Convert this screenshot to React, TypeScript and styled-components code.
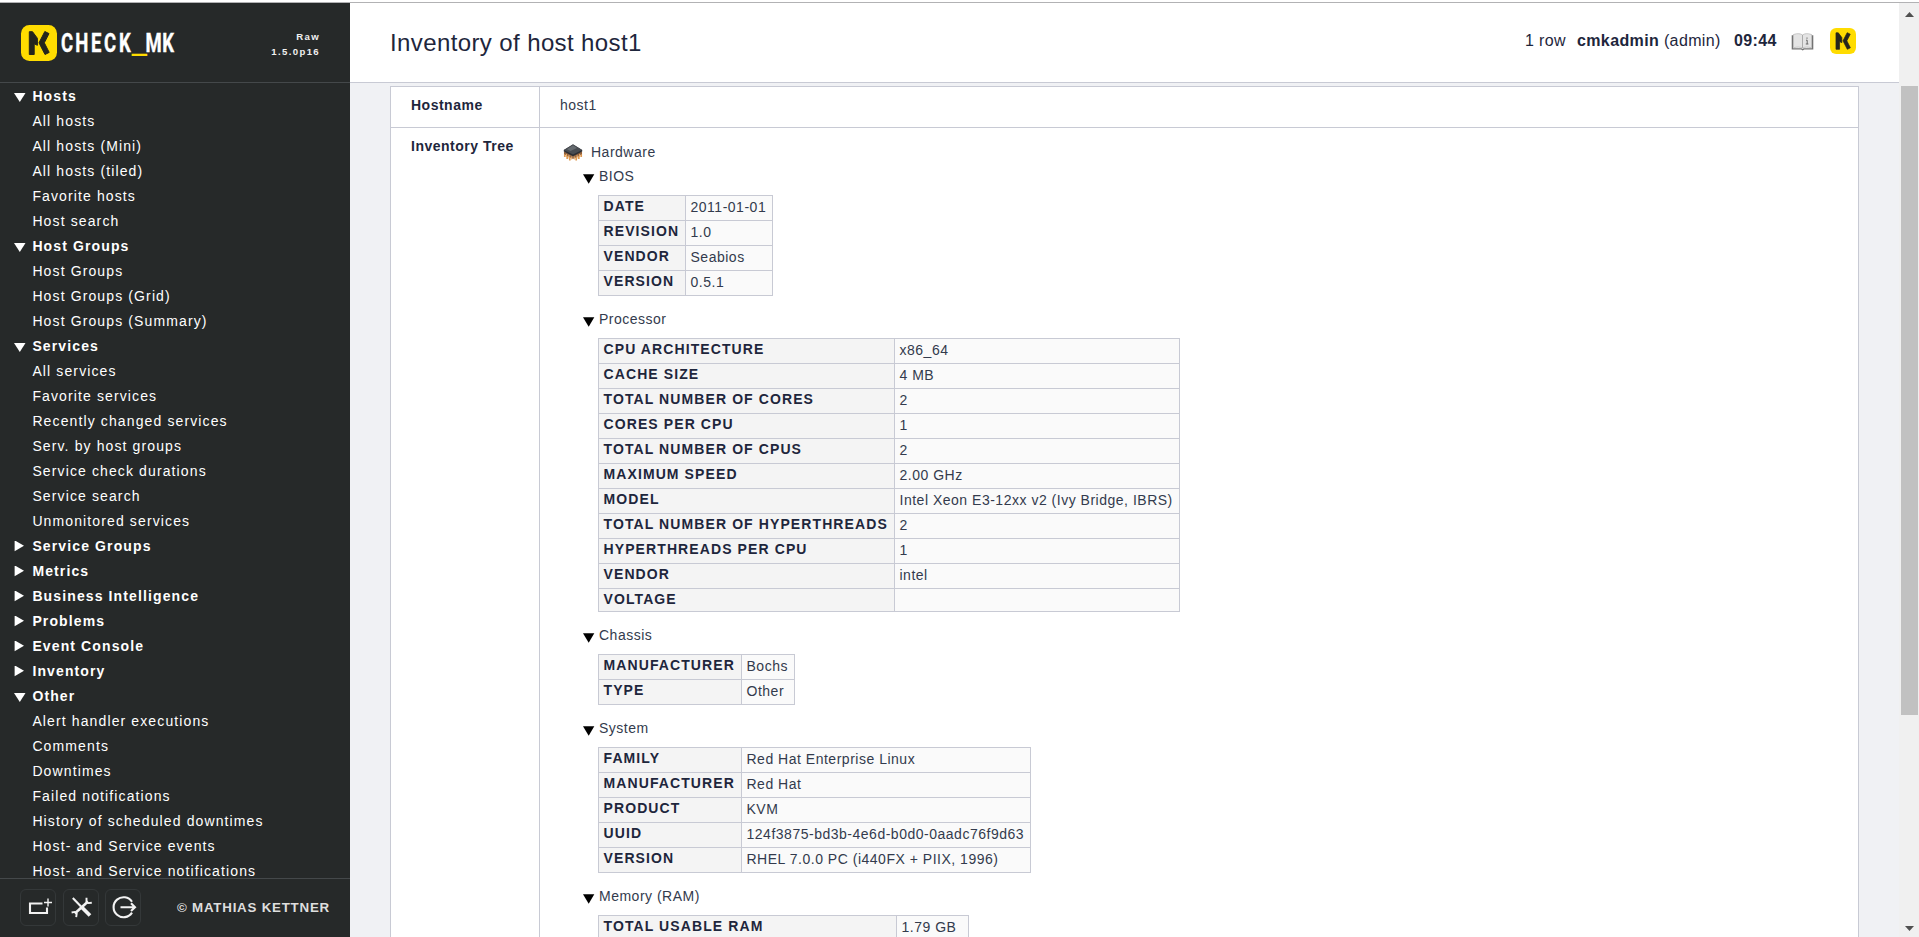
import React from "react";
import styled, { createGlobalStyle } from "styled-components";

const GlobalStyle = createGlobalStyle`
  * { box-sizing: border-box; }
  body {
    margin: 0;
    background: #fff;
    font-family: "Liberation Sans", Arial, sans-serif;
    font-size: 14px;
    overflow: hidden;
  }
`;

const Page = styled.div`
  display: flex;
  flex-direction: column;
  width: 1919px;
  height: 937px;
  overflow: hidden;
`;

const TopLine = styled.div`
  flex: none;
  height: 3px;
  background: #fff;
  border-bottom: 1px solid #b2b2b4;
`;

const Columns = styled.div`
  display: flex;
  flex: 1;
  min-height: 0;
`;

const Sidebar = styled.aside`
  display: flex;
  flex-direction: column;
  width: 350px;
  flex: none;
  background: #262929;
  color: #fff;
`;

const SideHead = styled.div`
  display: flex;
  justify-content: space-between;
  height: 80px;
  flex: none;
  padding: 22px 30px 0 21px;
  border-bottom: 1px solid #44484a;
  svg { overflow: visible; }
`;

const Version = styled.div`
  margin-top: 4px;
  text-align: right;
  font-size: 9.6px;
  line-height: 15px;
  font-weight: bold;
  letter-spacing: 1.35px;
  color: #f0f0f0;
`;

const Nav = styled.nav`
  flex: 1;
  min-height: 0;
  padding-top: 1px;
  overflow: hidden;
`;

const NavRow = styled.div<{ $head?: boolean }>`
  display: flex;
  align-items: center;
  height: 25px;
  padding-left: ${(p) => (p.$head ? 14 : 32.4)}px;
  font-weight: ${(p) => (p.$head ? "bold" : "normal")};
  letter-spacing: 1.12px;
  white-space: nowrap;
  line-height: 25px;

  svg { flex: none; width: 12px; height: 12px; margin-right: 6.4px; }
`;

const SideFoot = styled.div`
  display: flex;
  flex: none;
  height: 59px;
  padding: 10px 0 0 20px;
  border-top: 1px solid #44484a;
`;

const FootButton = styled.div<{ $gap: number }>`
  width: 36px;
  height: 37px;
  margin-right: ${(p) => p.$gap}px;
  border: 1px solid #343839;
  border-radius: 6px;
  svg { display: block; }
`;

const Copyright = styled.div`
  line-height: 37px;
  font-size: 13.33px;
  font-weight: bold;
  letter-spacing: 0.77px;
  color: #dedede;
  white-space: nowrap;
`;

const Content = styled.main`
  display: flex;
  flex-direction: column;
  flex: 1;
  min-width: 0;
  background: #f0f1f4;
  color: #1e263c;
`;

const Header = styled.header`
  display: flex;
  height: 80px;
  flex: none;
  padding-left: 40px;
  background: #fff;
  border-bottom: 1px solid #c8cad4;
`;

const Title = styled.h1`
  flex: 1;
  margin: 0;
  font-size: 24px;
  line-height: 79px;
  font-weight: normal;
  letter-spacing: 0.39px;
`;

const HeaderInfo = styled.div`
  display: flex;
  width: 374px;
  font-size: 16px;
  line-height: 75px;
  letter-spacing: 0.37px;
  white-space: pre;
  svg { display: block; }
`;

const InfoItem = styled.span<{ $width: number }>`
  width: ${(p) => p.$width}px;
`;

const BookSlot = styled.div`
  width: 39px;
  padding-top: 29px;
`;

const LogoSlot = styled.div`
  padding-top: 25px;
`;

const Details = styled.section`
  display: grid;
  grid-template-columns: 149px 1fr;
  grid-template-rows: 41px 1fr;
  flex: 1;
  min-height: 0;
  margin: 3px 40px 0 40px;
  border: 1px solid #c8cad4;
  border-bottom: 0;
  background: #fff;
  overflow: hidden;
`;

const Cell = styled.div<{ $label?: boolean; $top?: boolean }>`
  padding: 0 0 0 20px;
  line-height: 36px;
  letter-spacing: 0.5px;
  font-weight: ${(p) => (p.$label ? "bold" : "normal")};
  border-right: ${(p) => (p.$label ? "1px solid #c8cad4" : "0")};
  border-bottom: ${(p) => (p.$top ? "1px solid #c8cad4" : "0")};
  color: ${(p) => (p.$label ? "#1e263c" : "#333b4d")};
  overflow: hidden;
`;

const Root = styled.div`
  display: flex;
  align-items: center;
  height: 30px;
  margin-top: 9px;
  line-height: 30px;
  padding-left: 3px;
  svg { margin-right: 8px; }
`;

const Branch = styled.div`
  padding: 0 0 0 23px;
`;

const BranchTitle = styled.div<{ $first?: boolean }>`
  display: flex;
  height: ${(p) => (p.$first ? 28 : 42)}px;
  padding-top: ${(p) => (p.$first ? 0 : 14)}px;
  line-height: 18px;
  svg { margin: 7px 4px 0 0; }
`;

const DataTable = styled.table<{ $width: number }>`
  width: ${(p) => p.$width}px;
  margin-left: 15px;
  table-layout: fixed;
  border-collapse: collapse;
  white-space: nowrap;

  th, td {
    height: 25px;
    padding: 0 0 0 4.5px;
    border: 1px solid #c8cad4;
    text-align: left;
    vertical-align: top;
  }
  th {
    background: #f4f4f4;
    color: #1e263c;
    letter-spacing: 1.1px;
    line-height: 20px;
    text-transform: uppercase;
  }
  td {
    background: #fafafa;
    line-height: 22px;
    letter-spacing: 0.51px;
  }
  td:empty, tr:has(td:empty) th { height: 23px; }
`;

const Scrollbar = styled.div`
  display: flex;
  flex-direction: column;
  align-items: center;
  justify-content: space-between;
  width: 20px;
  flex: none;
  padding: 9px 0 6px 1px;
  background: #f0f0f0;
  svg { display: block; }
`;

const Track = styled.div`
  flex: 1;
  width: 17px;
  padding-top: 69px;
`;

const Thumb = styled.div`
  height: 629px;
  background: #c1c1c1;
`;

const Mark = ({ size }: { size: number }) => (
  <svg width={size} height={size} viewBox="0 0 36 36">
    <rect width="36" height="36" rx="8.5" fill="#ffdc00" />
    <g fill="#25251c" stroke="#25251c" strokeLinejoin="round">
      <path d="M8.300 6.700h3.200l4.900 6.600v7l-3.200-1.500v10.700H8.300z" />
      <path d="M23.800 6.500 28 8.600 23.300 17.800l4.900 9.600-4.200 2.100-6-11.700z" />
    </g>
  </svg>
);

const Brand = () => (
  <svg width="160" height="44" viewBox="0 0 160 44">
    <Mark size={36} />
    <text
      transform="scale(.74 1)"
      x="62.2 82.200 101.600 120.300 140.500 159.900 179.200 199"
      y="27"
      textAnchor="middle"
      fill="#fff"
      stroke="#fff"
      strokeWidth=".4"
      fontFamily="Roboto, sans-serif"
      fontWeight="700"
      fontSize="25"
    >
      CHECK<tspan y="24" fill="#ffdc00" stroke="none" fontFamily="Liberation Sans" fontWeight="400" fontSize="36">_</tspan><tspan y="27">MK</tspan>
    </text>
  </svg>
);

const Down = () => (
  <svg width="12" height="12" viewBox="0 0 12 12">
    <path d="M0 2h11.5L5.8 11z" fill="#fff" />
  </svg>
);

const Right = () => (
  <svg width="12" height="12" viewBox="0 0 12 12">
    <path d="M.6 -.7 10 4.800.6 10.300z" fill="#fff" overflow="visible" />
  </svg>
);

const TreeArrow = () => (
  <svg width="12" height="10" viewBox="0 0 12 10">
    <path d="M0 .3h11.3L5.7 9.7z" fill="#000" />
  </svg>
);

const Chip = () => (
  <svg width="20" height="18" viewBox="0 0 20 18">
    <path d="M1.800 9v5M4.200 10v6M6.800 11v6.500M13.200 11v6.500M15.800 10v6M18.200 9v5" stroke="#e09a50" strokeWidth="1.700" />
    <path d="M1 9l9-4 9 4v2L10 16 1 11z" fill="#8a5a36" opacity=".9" />
    <path d="M3.500 11v3M6 12v3.500M8.700 13.500v3M11.300 13.500v3M14 12v3.500M16.500 11v3" stroke="#e7aa68" strokeWidth="1" />
    <path d="M.8 7 10 1.500 19.200 7v1.500L10 13.200.8 8.500z" fill="#2c2e33" />
    <path d="M.8 7 10 1.200 19.200 7 10 11.600z" fill="#484c51" />
    <path d="M4 6.200 10 2.300l4 2.700-6.500 3z" fill="#80868a" opacity=".55" />
  </svg>
);

const Book = () => (
  <svg width="23" height="20" viewBox="0 0 23 20">
    <path d="M.7 3.2h1.5v13h8.4l1 .8 1-.8h8.2v-13h1.5v14.4h-9l-1.6 1-1.6-1H.7z" fill="#737373" />
    <path d="M2.5 2.5c4-1.4 7-1 9 .5v13c-2-1-5-1.2-9-.3zM11.5 3c2-1.500 5-1.900 9-.5v13.200c-4-.9-7-.7-9 .3z" fill="#e4e4e4" stroke="#aaa" strokeWidth=".6" />
    <path d="M11.500 3v13" stroke="#aaa" />
    <path d="M16 5.500v1.300M15 8.200h1.200v3.800M14.800 12h2.600" stroke="#666" fill="none" />
  </svg>
);

const AddSnapin = () => (
  <svg width="34" height="35" viewBox="0 0 34 35" fill="none" stroke="#f2f2f2">
    <path d="M21.500 13.500H9v9.500h17v-5.500" strokeWidth="2.100" />
    <path d="M27 8.500v8M23 12.500h8" strokeWidth="1.400" />
  </svg>
);

const Tools = () => (
  <svg width="34" height="35" viewBox="0 0 34 35" fill="none" stroke="#f2f2f2">
    <path d="M8.800 8 17 16.500" strokeWidth="2.100" />
    <path d="M17 16.500 26 25.500" strokeWidth="3.700" />
    <path d="M10.800 23.500 24 11.500" strokeWidth="2.500" />
    <path d="M22.500 7.700v3.900l1.600 1.500 3.700-.4M7.600 22.500l3.200-.6 1.900 1.700-.5 3.600" strokeWidth="1.900" />
  </svg>
);

const Logout = () => (
  <svg width="34" height="35" viewBox="0 0 34 35" fill="none" stroke="#f2f2f2" strokeWidth="2.100">
    <path d="M26 11.800a10 10 0 1 0 0 10.800" />
    <path d="M14.500 17.200h14.200M25 13.300l4 3.900-4 3.900" />
  </svg>
);

const ScrollArrow = ({ up }: { up?: boolean }) => (
  <svg width="9" height="5" viewBox="0 0 9 5">
    <path d={up ? "M0 5 4.500 0 9 5z" : "M0 0h9L4.500 5z"} fill="#505050" />
  </svg>
);

const menu: { title: string; open: boolean; items: string[] }[] = [
  { title: "Hosts", open: true, items: ["All hosts", "All hosts (Mini)", "All hosts (tiled)", "Favorite hosts", "Host search"] },
  { title: "Host Groups", open: true, items: ["Host Groups", "Host Groups (Grid)", "Host Groups (Summary)"] },
  {
    title: "Services",
    open: true,
    items: [
      "All services", "Favorite services", "Recently changed services", "Serv. by host groups",
      "Service check durations", "Service search", "Unmonitored services",
    ],
  },
  { title: "Service Groups", open: false, items: [] },
  { title: "Metrics", open: false, items: [] },
  { title: "Business Intelligence", open: false, items: [] },
  { title: "Problems", open: false, items: [] },
  { title: "Event Console", open: false, items: [] },
  { title: "Inventory", open: false, items: [] },
  {
    title: "Other",
    open: true,
    items: [
      "Alert handler executions", "Comments", "Downtimes", "Failed notifications",
      "History of scheduled downtimes", "Host- and Service events", "Host- and Service notifications",
    ],
  },
];

const tree: { title: string; width: number; label: number; rows: [string, string][] }[] = [
  {
    title: "BIOS", width: 175, label: 87,
    rows: [["Date", "2011-01-01"], ["Revision", "1.0"], ["Vendor", "Seabios"], ["Version", "0.5.1"]],
  },
  {
    title: "Processor", width: 582, label: 296,
    rows: [
      ["CPU Architecture", "x86_64"], ["Cache Size", "4 MB"], ["Total Number of Cores", "2"],
      ["Cores per CPU", "1"], ["Total Number of CPUs", "2"], ["Maximum Speed", "2.00 GHz"],
      ["Model", "Intel Xeon E3-12xx v2 (Ivy Bridge, IBRS)"], ["Total Number of Hyperthreads", "2"],
      ["Hyperthreads per CPU", "1"], ["Vendor", "intel"], ["Voltage", ""],
    ],
  },
  { title: "Chassis", width: 197, label: 143, rows: [["Manufacturer", "Bochs"], ["Type", "Other"]] },
  {
    title: "System", width: 433, label: 143,
    rows: [
      ["Family", "Red Hat Enterprise Linux"], ["Manufacturer", "Red Hat"], ["Product", "KVM"],
      ["UUID", "124f3875-bd3b-4e6d-b0d0-0aadc76f9d63"], ["Version", "RHEL 7.0.0 PC (i440FX + PIIX, 1996)"],
    ],
  },
  { title: "Memory (RAM)", width: 371, label: 298, rows: [["Total usable RAM", "1.79 GB"]] },
];

export default function App() {
  return (
    <Page>
      <GlobalStyle />
      <TopLine />
      <Columns>
        <Sidebar>
          <SideHead>
            <Brand />
            <Version>Raw<br />1.5.0p16</Version>
          </SideHead>
          <Nav>
            {menu.map((group) => (
              <React.Fragment key={group.title}>
                <NavRow $head>{group.open ? <Down /> : <Right />}{group.title}</NavRow>
                {group.items.map((item) => <NavRow key={item}>{item}</NavRow>)}
              </React.Fragment>
            ))}
          </Nav>
          <SideFoot>
            <FootButton $gap={7}><AddSnapin /></FootButton>
            <FootButton $gap={6}><Tools /></FootButton>
            <FootButton $gap={36}><Logout /></FootButton>
            <Copyright>© MATHIAS KETTNER</Copyright>
          </SideFoot>
        </Sidebar>
        <Content>
          <Header>
            <Title>Inventory of host host1</Title>
            <HeaderInfo>
              <InfoItem $width={52}>1 row</InfoItem>
              <InfoItem $width={157}><b>cmkadmin</b> (admin)</InfoItem>
              <InfoItem $width={57}><b>09:44</b></InfoItem>
              <BookSlot><Book /></BookSlot>
              <LogoSlot><Mark size={26} /></LogoSlot>
            </HeaderInfo>
          </Header>
          <Details>
            <Cell $label $top>Hostname</Cell>
            <Cell $top>host1</Cell>
            <Cell $label>Inventory Tree</Cell>
            <Cell>
              <Root><Chip />Hardware</Root>
              <Branch>
                {tree.map((node, i) => (
                  <React.Fragment key={node.title}>
                    <BranchTitle $first={i === 0}><TreeArrow />{node.title}</BranchTitle>
                    <DataTable $width={node.width}>
                      <colgroup>
                        <col width={node.label} />
                        <col />
                      </colgroup>
                      <tbody>
                        {node.rows.map(([k, v]) => <tr key={k}><th>{k}</th><td>{v}</td></tr>)}
                      </tbody>
                    </DataTable>
                  </React.Fragment>
                ))}
              </Branch>
            </Cell>
          </Details>
        </Content>
        <Scrollbar>
          <ScrollArrow up />
          <Track><Thumb /></Track>
          <ScrollArrow />
        </Scrollbar>
      </Columns>
    </Page>
  );
}
